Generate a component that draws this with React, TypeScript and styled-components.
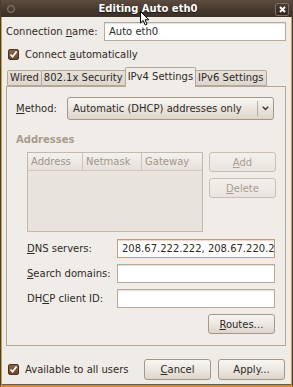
import React from 'react'
import styled, { createGlobalStyle } from 'styled-components'

const GlobalStyle = createGlobalStyle`
  html, body {
    margin: 0;
    padding: 0;
    background: #efebe6;
  }
  body {
    font-family: 'DejaVu Sans', 'Liberation Sans', sans-serif;
    font-size: 10px;
    color: #2f2a25;
  }
`

const Window = styled.div`
  position: relative;
  width: 293px;
  height: 387px;
  box-sizing: border-box;
  display: flex;
  flex-direction: column;
  background: #efebe6;
  border-left: 1px solid #4b3d31;
  border-right: 1px solid #4b3d31;
  border-bottom: 2px solid #d9862c;
  box-shadow: inset 1px 0 0 #c7a24d, inset -1px 0 0 #c7a24d, inset 0 -1px 0 #6e5a48;
  overflow: hidden;
`

const TitleBar = styled.div`
  flex: none;
  height: 17px;
  display: grid;
  grid-template-columns: 1fr auto 1fr;
  align-items: center;
  padding: 0 3px 0 6px;
  background: linear-gradient(#5d4c40, #45382e 60%, #3d3128);
  color: #fff;
  font-weight: bold;
  font-size: 10px;
  text-shadow: 0 1px 1px #1c140e;
`

const MenuDot = styled.span`
  justify-self: start;
  width: 6px;
  height: 6px;
  border-radius: 50%;
  border: 1px solid #8a7c70;
  box-shadow: inset 0 0 0 1px #56483d;
`

const CloseButton = styled.span`
  justify-self: end;
  width: 12px;
  height: 11px;
  margin-top: 1px;
  display: flex;
  align-items: center;
  justify-content: center;
  border: 1px solid #7d6e62;
  border-radius: 2px;
  background: linear-gradient(#4b3e34, #33291f);
`

const Body = styled.div`
  flex: 1;
  display: flex;
  flex-direction: column;
  padding: 5px 6px 0 5px;
`

const NameRow = styled.div`
  display: grid;
  grid-template-columns: 98px 1fr;
  align-items: center;
`

const Label = styled.span<{ $dim?: boolean }>`
  white-space: nowrap;
  color: ${p => (p.$dim ? '#a89b8d' : '#2f2a25')};
`

const U = styled.span`
  text-decoration: underline;
  text-underline-offset: 1px;
`

const TextInput = styled.div<{ $focus?: boolean }>`
  height: 19px;
  box-sizing: border-box;
  display: flex;
  align-items: center;
  padding: 0 4px;
  overflow: hidden;
  white-space: nowrap;
  background: #fff;
  border: 1px solid ${p => (p.$focus ? '#d49679' : '#b5aa9c')};
  box-shadow: inset 0 1px 1px ${p => (p.$focus ? '#f0d6c8' : '#e4ded6')};
`

const CheckRow = styled.label`
  display: flex;
  align-items: center;
  gap: 6px;
  padding-left: 2px;
  height: 12px;
`

const CheckBox = styled.span`
  width: 11px;
  height: 11px;
  box-sizing: border-box;
  display: flex;
  align-items: center;
  justify-content: center;
  border: 1px solid #4c3322;
  border-radius: 2px;
  background: linear-gradient(#8a6444, #6a4a30);
`

const Notebook = styled.div`
  margin-top: 7px;
  display: flex;
  flex-direction: column;
`

const TabStrip = styled.div`
  display: flex;
  align-items: flex-end;
  height: 19px;
  padding-left: 1px;
  position: relative;
  z-index: 1;
`

const Tab = styled.div<{ $active?: boolean }>`
  box-sizing: border-box;
  height: ${p => (p.$active ? '20px' : '16px')};
  margin-bottom: ${p => (p.$active ? '-1px' : '0')};
  padding: ${p => (p.$active ? '3px 2px 0' : '1px 2px 0')};
  display: flex;
  align-items: flex-start;
  white-space: nowrap;
  border: 1px solid #b3a797;
  border-bottom: ${p => (p.$active ? 'none' : '1px solid #b3a797')};
  border-radius: 2px 2px 0 0;
  background: ${p => (p.$active ? '#f0ede8' : 'linear-gradient(#e7e1da, #ddd6ce)')};
  & + & {
    margin-left: -1px;
  }
`

const Panel = styled.div`
  border: 1px solid #b3a797;
  background: #f0ede8;
  padding: 10px 10px 11px 9px;
  display: flex;
  flex-direction: column;
`

const MethodRow = styled.div`
  display: grid;
  grid-template-columns: 51px 1fr;
  align-items: center;
  padding-right: 1px;
`

const Combo = styled.div`
  height: 23px;
  box-sizing: border-box;
  display: flex;
  align-items: center;
  border: 1px solid #a4978a;
  border-radius: 3px;
  background: linear-gradient(#f8f6f3, #e9e3dc 55%, #ddd5cb);
`

const ComboText = styled.span`
  flex: 1;
  padding-left: 5px;
  white-space: nowrap;
`

const ComboArrow = styled.span`
  width: 14px;
  height: 15px;
  margin-right: 1px;
  display: flex;
  align-items: center;
  justify-content: center;
  border-left: 1px solid #b9ad9f;
`

const SectionTitle = styled.div`
  margin-top: 14px;
  line-height: 12px;
  font-weight: bold;
  color: #a89b8d;
`

const AddressGrid = styled.div`
  margin-top: 6px;
  padding-left: 11px;
  display: grid;
  grid-template-columns: 176px 1fr;
  column-gap: 6px;
`

const Tree = styled.div`
  height: 80px;
  box-sizing: border-box;
  border: 1px solid #c2b8ab;
  background: #e8e3dd;
  display: flex;
  flex-direction: column;
`

const TreeHeader = styled.div`
  height: 17px;
  display: grid;
  grid-template-columns: 54px 59px 1fr;
  background: linear-gradient(#f4f1ed, #e6e0d9);
  border-bottom: 1px solid #d2c9be;
`

const HeaderCell = styled.span`
  display: flex;
  align-items: center;
  padding-left: 3px;
  color: #a2968a;
  & + & {
    border-left: 1px solid #cdc3b8;
  }
`

const ButtonColumn = styled.div`
  display: flex;
  flex-direction: column;
  gap: 6px;
`

const Button = styled.div<{ $disabled?: boolean }>`
  width: 67px;
  height: 20px;
  box-sizing: border-box;
  display: flex;
  align-items: center;
  justify-content: center;
  border: 1px solid ${p => (p.$disabled ? '#c9bfb3' : '#a4978a')};
  border-radius: 3px;
  color: ${p => (p.$disabled ? '#aa9e92' : '#2f2a25')};
  background: ${p =>
    p.$disabled
      ? 'linear-gradient(#f3f0ec, #e9e4de)'
      : 'linear-gradient(#f8f6f3, #ebe6df 55%, #ddd5cb)'};
`

const Fields = styled.div`
  margin-top: 7px;
  padding-left: 11px;
  display: grid;
  grid-template-columns: 90px 1fr;
  row-gap: 6px;
  align-items: center;
`

const RoutesRow = styled.div`
  margin-top: 6px;
  display: flex;
  justify-content: flex-end;
`

const BottomRow = styled.div`
  margin-top: 13px;
  display: flex;
  align-items: center;
`

const Spacer = styled.div`
  flex: 1;
`

const DialogButtons = styled.div`
  display: flex;
  gap: 7px;
  padding-right: 1px;
`

const BigButton = styled(Button)`
  height: 21px;
`

const Cursor = styled.svg`
  position: absolute;
  left: 139px;
  top: 11px;
`

const Check = () => (
  <CheckBox>
    <svg width='9' height='9' viewBox='0 0 9 9'>
      <path d='M1.5 4.5 L3.6 6.8 L7.6 1.6' fill='none' stroke='#fff' strokeWidth='1.7' />
    </svg>
  </CheckBox>
)

const fields = [
  { key: 'D', rest: 'NS servers:', value: '208.67.222.222, 208.67.220.220', focus: true },
  { key: 'S', rest: 'earch domains:', value: '' },
]

const App = () => (
  <>
    <GlobalStyle />
    <Window>
      <TitleBar>
        <MenuDot />
        <span>Editing Auto eth0</span>
        <CloseButton>
          <svg width='7' height='7' viewBox='0 0 7 7'>
            <path d='M1 1 L6 6 M6 1 L1 6' stroke='#fff' strokeWidth='1.8' />
          </svg>
        </CloseButton>
      </TitleBar>
      <Body>
        <NameRow>
          <Label>
            Connection <U>n</U>ame:
          </Label>
          <TextInput>Auto eth0</TextInput>
        </NameRow>
        <CheckRow style={{ marginTop: 7 }}>
          <Check />
          <span>
            Connect <U>a</U>utomatically
          </span>
        </CheckRow>
        <Notebook>
          <TabStrip>
            <Tab>Wired</Tab>
            <Tab>802.1x Security</Tab>
            <Tab $active>IPv4 Settings</Tab>
            <Tab>IPv6 Settings</Tab>
          </TabStrip>
          <Panel>
            <MethodRow>
              <Label>
                <U>M</U>ethod:
              </Label>
              <Combo>
                <ComboText>Automatic (DHCP) addresses only</ComboText>
                <ComboArrow>
                  <svg width='7' height='5' viewBox='0 0 7 5'>
                    <path d='M0.8 0.8 L3.5 3.6 L6.2 0.8' fill='none' stroke='#3b332c' strokeWidth='1.4' />
                  </svg>
                </ComboArrow>
              </Combo>
            </MethodRow>
            <SectionTitle>Addresses</SectionTitle>
            <AddressGrid>
              <Tree>
                <TreeHeader>
                  <HeaderCell>Address</HeaderCell>
                  <HeaderCell>Netmask</HeaderCell>
                  <HeaderCell>Gateway</HeaderCell>
                </TreeHeader>
              </Tree>
              <ButtonColumn>
                <Button $disabled>
                  <span>
                    <U>A</U>dd
                  </span>
                </Button>
                <Button $disabled>
                  <span>
                    <U>D</U>elete
                  </span>
                </Button>
              </ButtonColumn>
            </AddressGrid>
            <Fields>
              {fields.map(f => (
                <React.Fragment key={f.key}>
                  <Label>
                    <U>{f.key}</U>
                    {f.rest}
                  </Label>
                  <TextInput $focus={f.focus}>{f.value}</TextInput>
                </React.Fragment>
              ))}
              <Label>
                DH<U>C</U>P client ID:
              </Label>
              <TextInput />
            </Fields>
            <RoutesRow>
              <Button>
                <span>
                  <U>R</U>outes…
                </span>
              </Button>
            </RoutesRow>
          </Panel>
        </Notebook>
        <BottomRow>
          <CheckRow>
            <Check />
            <span>Available to all users</span>
          </CheckRow>
          <Spacer />
          <DialogButtons>
            <BigButton>
              <span>
                <U>C</U>ancel
              </span>
            </BigButton>
            <BigButton>
              <span>Apply...</span>
            </BigButton>
          </DialogButtons>
        </BottomRow>
      </Body>
      <Cursor width='10' height='15' viewBox='0 0 10 15'>
        <path
          d='M0.5 0.5 L0.5 12 L3.2 9.4 L5.2 14 L7 13.2 L5.1 8.8 L8.8 8.8 Z'
          fill='#fff'
          stroke='#000'
          strokeWidth='1'
          strokeLinejoin='round'
        />
      </Cursor>
    </Window>
  </>
)

export default App
